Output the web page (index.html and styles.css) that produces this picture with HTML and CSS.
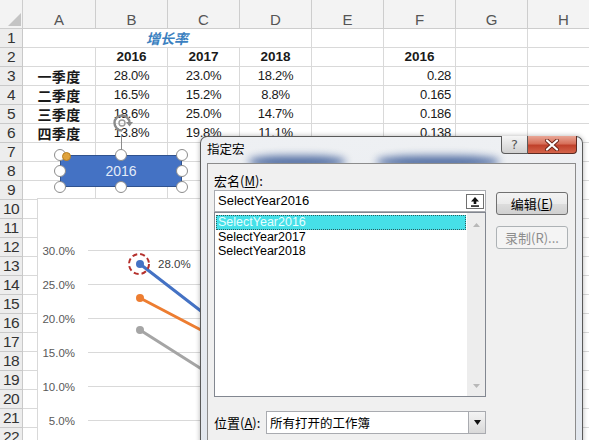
FILE: index.html
```html
<!DOCTYPE html>
<html>
<head>
<meta charset="utf-8">
<link rel="stylesheet" href="styles.css">
</head>
<body>
<div class="sheet">
<div class="ch corner"><svg width="13" height="13" viewBox="0 0 13 13"><polygon points="13,0 13,13 0,13" fill="#c4c4c4"/></svg></div>
<div class="ch">A</div><div class="ch">B</div><div class="ch">C</div><div class="ch">D</div><div class="ch">E</div><div class="ch">F</div><div class="ch">G</div><div class="ch">H</div>

<div class="rh">1</div><div class="title">增长率</div><div></div><div></div><div></div><div></div>

<div class="rh">2</div><div></div><div class="b">2016</div><div class="b">2017</div><div class="b">2018</div><div></div><div class="b">2016</div><div></div><div></div>

<div class="rh">3</div><div class="q">一季度</div><div>28.0%</div><div>23.0%</div><div>18.2%</div><div></div><div class="r">0.28</div><div></div><div></div>

<div class="rh">4</div><div class="q">二季度</div><div>16.5%</div><div>15.2%</div><div>8.8%</div><div></div><div class="r">0.165</div><div></div><div></div>

<div class="rh">5</div><div class="q">三季度</div><div>18.6%</div><div>25.0%</div><div>14.7%</div><div></div><div class="r">0.186</div><div></div><div></div>

<div class="rh">6</div><div class="q">四季度</div><div>13.8%</div><div>19.8%</div><div>11.1%</div><div></div><div class="r">0.138</div><div></div><div></div>

<div class="rh">7</div><div></div><div></div><div></div><div></div><div></div><div></div><div></div><div></div>
<div class="rh">8</div><div></div><div></div><div></div><div></div><div></div><div></div><div></div><div></div>
<div class="rh">9</div><div></div><div></div><div></div><div></div><div></div><div></div><div></div><div></div>
<div class="rh">10</div><div></div><div></div><div></div><div></div><div></div><div></div><div></div><div></div>
<div class="rh">11</div><div></div><div></div><div></div><div></div><div></div><div></div><div></div><div></div>
<div class="rh">12</div><div></div><div></div><div></div><div></div><div></div><div></div><div></div><div></div>
<div class="rh">13</div><div></div><div></div><div></div><div></div><div></div><div></div><div></div><div></div>
<div class="rh">14</div><div></div><div></div><div></div><div></div><div></div><div></div><div></div><div></div>
<div class="rh">15</div><div></div><div></div><div></div><div></div><div></div><div></div><div></div><div></div>
<div class="rh">16</div><div></div><div></div><div></div><div></div><div></div><div></div><div></div><div></div>
<div class="rh">17</div><div></div><div></div><div></div><div></div><div></div><div></div><div></div><div></div>
<div class="rh">18</div><div></div><div></div><div></div><div></div><div></div><div></div><div></div><div></div>
<div class="rh">19</div><div></div><div></div><div></div><div></div><div></div><div></div><div></div><div></div>
<div class="rh">20</div><div></div><div></div><div></div><div></div><div></div><div></div><div></div><div></div>
<div class="rh">21</div><div></div><div></div><div></div><div></div><div></div><div></div><div></div><div></div>
<div class="rh">22</div><div></div><div></div><div></div><div></div><div></div><div></div><div></div><div></div>
</div>

<svg class="chart" width="440" height="260" viewBox="37 198 440 260">
  <rect x="37.5" y="198.5" width="439" height="259" fill="#fff" stroke="#d9d9d9"/>
  <g stroke="#d9d9d9" stroke-width="1">
    <line x1="88" y1="250.5" x2="477" y2="250.5"/>
    <line x1="88" y1="284.5" x2="477" y2="284.5"/>
    <line x1="88" y1="318.5" x2="477" y2="318.5"/>
    <line x1="88" y1="352.5" x2="477" y2="352.5"/>
    <line x1="88" y1="386.5" x2="477" y2="386.5"/>
    <line x1="88" y1="420.5" x2="477" y2="420.5"/>
  </g>
  <g font-family="Liberation Sans, sans-serif" font-size="11.5" fill="#595959" text-anchor="end">
    <text x="75" y="255">30.0%</text>
    <text x="75" y="289">25.0%</text>
    <text x="75" y="323">20.0%</text>
    <text x="75" y="357">15.0%</text>
    <text x="75" y="391">10.0%</text>
    <text x="75" y="425">5.0%</text>
  </g>
  <g stroke-width="3" stroke-linecap="round">
    <line x1="140" y1="330" x2="241" y2="394" stroke="#a5a5a5"/>
    <line x1="140" y1="298" x2="241" y2="351" stroke="#ed7d31"/>
    <line x1="140" y1="264" x2="241" y2="342" stroke="#4472c4"/>
  </g>
  <circle cx="140" cy="330" r="4" fill="#a5a5a5"/>
  <circle cx="140" cy="298" r="4" fill="#ed7d31"/>
  <circle cx="140" cy="264" r="4" fill="#4472c4"/>
  <circle cx="139" cy="264" r="10" fill="none" stroke="#b5302c" stroke-width="2" stroke-dasharray="5 3"/>
  <text x="158" y="268" font-family="Liberation Sans, sans-serif" font-size="11.5" fill="#404040">28.0%</text>
</svg>

<div class="shape">
  <span class="rot-line"></span>
  <svg class="rot" width="22" height="22" viewBox="0 0 22 22">
    <path d="M11 18.5 A7.5 7.5 0 1 1 18.5 11" fill="none" stroke="#8a8a8a" stroke-width="2.4"/>
    <circle cx="11" cy="11" r="3" fill="none" stroke="#9a9a9a" stroke-width="1.4"/>
    <polygon points="15,10 22,10 18.5,14.5" fill="#8a8a8a"/>
  </svg>
  <span class="label">2016</span>
  <span class="hd tl"></span><span class="hd tc"></span><span class="hd tr"></span>
  <span class="hd ml"></span><span class="hd mr"></span>
  <span class="hd bl"></span><span class="hd bc"></span><span class="hd br"></span>
  <span class="adj"></span>
</div>

<div class="dialog">
  <div class="titlebar">
    <span class="glass g1"></span>
    <span class="glass g2"></span>
    <span class="ttl">指定宏</span>
    <div class="ctrls">
      <span class="help">?</span>
      <span class="close"><svg width="16" height="12" viewBox="0 0 16 12"><path d="M3 1.5 L13 10.5 M13 1.5 L3 10.5" stroke="#6b2518" stroke-width="4" stroke-linecap="round"/><path d="M3 1.5 L13 10.5 M13 1.5 L3 10.5" stroke="#fff" stroke-width="2.2" stroke-linecap="round"/></svg></span>
    </div>
  </div>
  <div class="client">
    <div class="leftcol">
      <div class="lbl">宏名(<u>M</u>):</div>
      <div class="input">
        <span>SelectYear2016</span>
        <span class="up"><svg width="10" height="11" viewBox="0 0 10 11"><path d="M5 1 L9 5.5 H6.3 V8 H3.7 V5.5 H1 Z" fill="#111"/><rect x="1" y="9.3" width="8" height="1.5" fill="#111"/></svg></span>
      </div>
      <div class="list">
        <div class="items">
          <div class="item sel">SelectYear2016</div>
          <div class="item">SelectYear2017</div>
          <div class="item">SelectYear2018</div>
        </div>
        <div class="sb">
          <svg width="7" height="4" viewBox="0 0 7 4"><polygon points="3.5,0 7,4 0,4" fill="#b8b8b8"/></svg>
          <svg width="7" height="4" viewBox="0 0 7 4"><polygon points="0,0 7,0 3.5,4" fill="#b8b8b8"/></svg>
        </div>
      </div>
      <div class="pos">
        <span class="poslbl">位置(<u>A</u>):</span>
        <div class="select">
          <span>所有打开的工作簿</span>
          <span class="dd"><svg width="7" height="5" viewBox="0 0 7 5"><polygon points="0,0 7,0 3.5,5" fill="#111"/></svg></span>
        </div>
      </div>
    </div>
    <div class="rightcol">
      <div class="btn">编辑(<u>E</u>)</div>
      <div class="btn dis">录制(R)...</div>
    </div>
  </div>
</div>
</body>
</html>
```

FILE: styles.css
```css
* { box-sizing: border-box; }
html, body { margin: 0; padding: 0; }
body {
  width: 589px;
  height: 440px;
  overflow: hidden;
  position: relative;
  background: #fff;
  font-family: "Liberation Sans", "Noto Sans CJK SC", sans-serif;
}

/* ---------- spreadsheet ---------- */
.sheet {
  display: grid;
  grid-template-columns: 23px 73px repeat(7, 72px);
  grid-template-rows: 29px;
  grid-auto-rows: 19px;
  width: 600px;
}
.sheet > div {
  border-right: 1px solid #d9d9d9;
  border-bottom: 1px solid #d9d9d9;
  font-size: 13px;
  line-height: 18px;
  text-align: center;
  white-space: nowrap;
  color: #1a1a1a;
  letter-spacing: -0.3px;
}
.sheet > .ch {
  background: #f3f3f3;
  border-color: #cdcdcd;
  color: #555;
  font-size: 15px;
  line-height: 16px;
  padding-top: 12px;
  letter-spacing: 0;
}
.sheet > .ch.corner {
  padding: 0 1px 2px 0;
  display: flex;
  align-items: flex-end;
  justify-content: flex-end;
}
.sheet > .rh {
  background: #ededed;
  border-color: #c9c9c9;
  color: #333;
  font-size: 15.5px;
  letter-spacing: -0.6px;
}
.sheet > .title {
  grid-column: span 4;
  color: #3a7fc0;
  font-family: "Noto Sans CJK SC", sans-serif;
  font-style: italic;
  font-weight: bold;
  font-size: 14px;
  letter-spacing: 0;
}
.sheet > .b {
  font-weight: bold;
  font-size: 13.5px;
  letter-spacing: 0;
}
.sheet > .q {
  font-family: "Noto Sans CJK SC", sans-serif;
  font-weight: bold;
  font-size: 14px;
  letter-spacing: 0.3px;
}
.sheet > .r {
  text-align: right;
  padding-right: 4px;
}

/* ---------- chart ---------- */
.chart {
  position: absolute;
  left: 37px;
  top: 198px;
}

/* ---------- shape button ---------- */
.shape {
  position: absolute;
  left: 60px;
  top: 155px;
  width: 122px;
  height: 32px;
  background: #4472c4;
  border: 1px solid #2f528f;
  display: flex;
  align-items: center;
  justify-content: center;
}
.shape .label {
  color: #e3ebf8;
  font-size: 14px;
}
.hd {
  position: absolute;
  width: 12px;
  height: 12px;
  border-radius: 50%;
  background: #fff;
  border: 1.5px solid #8c8c8c;
  transform: translate(-50%, -50%);
}
.tl { left: -1px; top: -1px; }
.tc { left: 50%; top: -1px; }
.tr { left: calc(100% + 1px); top: -1px; }
.ml { left: -1px; top: 50%; }
.mr { left: calc(100% + 1px); top: 50%; }
.bl { left: -1px; top: calc(100% + 1px); }
.bc { left: 50%; top: calc(100% + 1px); }
.br { left: calc(100% + 1px); top: calc(100% + 1px); }
.adj {
  position: absolute;
  left: 1px;
  top: -4px;
  width: 9px;
  height: 9px;
  border-radius: 50%;
  background: #e0a33c;
  border: 1px solid #b97f22;
}
.rot-line {
  position: absolute;
  left: 60px;
  top: -22px;
  width: 1px;
  height: 17px;
  background: #8c8c8c;
}
.rot {
  position: absolute;
  left: 50px;
  top: -44px;
}

/* ---------- dialog ---------- */
.dialog {
  position: absolute;
  left: 200px;
  top: 136px;
  width: 383px;
  height: 320px;
  border: 1px solid #5a5a5a;
  border-bottom: none;
  border-radius: 7px 7px 0 0;
  background: linear-gradient(#eef0f3, #e2e7ee);
  padding: 0 6px;
  display: flex;
  flex-direction: column;
  box-shadow: 0 0 5px rgba(0, 0, 0, 0.3);
  font-family: "Noto Sans CJK SC", sans-serif;
  color: #000;
}
.titlebar {
  height: 26px;
  position: relative;
  display: flex;
  align-items: flex-start;
}
.glass {
  position: absolute;
  height: 12px;
  border-radius: 40%;
  background: #3c5c98;
  filter: blur(4px);
  opacity: 0.9;
}
.g1 { left: 42px; top: 19px; width: 96px; }
.g2 { left: 170px; top: 19px; width: 122px; }
.ttl {
  position: relative;
  font-size: 12.5px;
  line-height: 16px;
  padding-top: 4px;
}
.ctrls {
  position: relative;
  margin-left: auto;
  margin-right: -1px;
  margin-top: -1px;
  display: flex;
}
.help {
  width: 27px;
  height: 18px;
  border: 1px solid #5b5b5b;
  border-top: none;
  border-radius: 0 0 0 4px;
  background: linear-gradient(#f5f5f5, #d0d0d0);
  color: #555;
  font: 13px/17px "DejaVu Sans", sans-serif;
  text-align: center;
}
.close {
  width: 49px;
  height: 18px;
  border: 1px solid #5b2a22;
  border-top: none;
  border-left: none;
  border-radius: 0 0 4px 0;
  background: linear-gradient(#e9a797 0%, #d7705a 45%, #c0412b 55%, #d4644b 100%);
  display: flex;
  align-items: center;
  justify-content: center;
}
.client {
  position: relative;
  flex: 1;
  background: #f0f0f0;
  border: 1px solid #8c8c8c;
  display: flex;
  gap: 10px;
  padding: 0 7px 0 6px;
}
.leftcol {
  width: 272px;
  display: flex;
  flex-direction: column;
}
.lbl {
  height: 26px;
  padding-top: 8px;
  font-size: 13px;
  line-height: 18px;
}
.input {
  height: 22px;
  border: 1px solid #a9abb0;
  background: #fff;
  display: flex;
  align-items: center;
  padding: 0 1px 0 3px;
  font-family: "Liberation Sans", sans-serif;
  font-size: 13px;
  line-height: 16px;
}
.up {
  margin-left: auto;
  width: 18px;
  height: 15px;
  border: 1px solid #707070;
  background: #fff;
  display: flex;
  align-items: center;
  justify-content: center;
}
.list {
  height: 185px;
  border: 1px solid #828790;
  background: #fff;
  display: flex;
}
.items {
  flex: 1;
  padding: 2px 1px;
}
.item {
  height: 14.5px;
  line-height: 14.5px;
  padding-left: 2px;
  font-family: "Liberation Sans", sans-serif;
  font-size: 12.5px;
  white-space: nowrap;
}
.item.sel {
  background: #46e0e8;
  color: #e6feff;
  outline: 1px dotted #2a5d60;
  outline-offset: -1px;
}
.sb {
  width: 18px;
  background: #ededed;
  display: flex;
  flex-direction: column;
  justify-content: space-between;
  align-items: center;
  padding: 10px 0 8px;
}
.pos {
  display: flex;
  align-items: center;
  margin-top: 14px;
}
.poslbl {
  width: 52px;
  font-size: 13px;
  line-height: 18px;
}
.select {
  width: 220px;
  height: 23px;
  border: 1px solid #a9abb0;
  background: #fff;
  display: flex;
  align-items: center;
  padding-left: 3px;
  font-size: 12.5px;
  line-height: 18px;
}
.dd {
  margin-left: auto;
  width: 17px;
  height: 21px;
  border-left: 1px solid #a9abb0;
  background: linear-gradient(#f4f4f4, #d9d9d9);
  display: flex;
  align-items: center;
  justify-content: center;
}
.rightcol {
  width: 72px;
  padding-top: 28px;
  display: flex;
  flex-direction: column;
  gap: 11px;
}
.btn {
  height: 23px;
  border: 1px solid #707070;
  border-radius: 3px;
  background: linear-gradient(#f3f3f3 0%, #ebebeb 50%, #dddddd 51%, #d0d0d0 100%);
  display: flex;
  align-items: center;
  justify-content: center;
  font-size: 13px;
  line-height: 18px;
}
.btn.dis {
  color: #8d8d8d;
  border-color: #adb2b5;
  background: #f4f4f4;
}
```
